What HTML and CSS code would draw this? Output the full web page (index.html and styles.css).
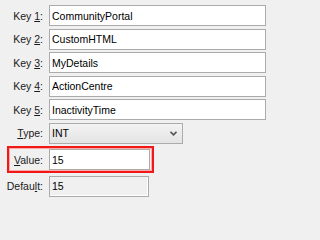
FILE: index.html
```html
<!DOCTYPE html>
<html>
<head>
<meta charset="utf-8">
<link rel="stylesheet" href="styles.css">
</head>
<body>
<div class="form">
  <div class="row"><span class="lbl">Key <u>1</u>:</span><div class="field text">CommunityPortal</div></div>
  <div class="row"><span class="lbl">Key <u>2</u>:</span><div class="field text">CustomHTML</div></div>
  <div class="row"><span class="lbl">Key <u>3</u>:</span><div class="field text">MyDetails</div></div>
  <div class="row"><span class="lbl">Key <u>4</u>:</span><div class="field text">ActionCentre</div></div>
  <div class="row"><span class="lbl">Key <u>5</u>:</span><div class="field text">InactivityTime</div></div>
  <div class="row"><span class="lbl"><u>T</u>ype:</span><div class="field combo"><span>INT</span><svg class="chev" width="7" height="5" viewBox="0 0 7 5"><path d="M0.5 0.8 L3.5 3.8 L6.5 0.8" fill="none" stroke="#555" stroke-width="1.6"/></svg></div></div>
  <div class="row hl"><span class="lbl"><u>V</u>alue:</span><div class="field text small">15</div></div>
  <div class="row"><span class="lbl">Defau<u>l</u>t:</span><div class="field ro">15</div></div>
</div>
</body>
</html>
```
FILE: styles.css
```css
html, body {
  margin: 0;
  background: #f0f0f0;
}
body {
  font-family: "Liberation Sans", Arial, sans-serif;
  font-size: 10.5px;
  color: #000;
  width: 271px;
  height: 202px;
  overflow: hidden;
}
.form {
  display: flex;
  flex-direction: column;
  row-gap: 2.5px;
  padding-top: 5px;
}
.row {
  display: flex;
  align-items: center;
  height: 21px;
}
.lbl {
  width: 43px;
  margin-right: 6px;
  text-align: right;
  color: #1a1a1a;
  white-space: nowrap;
}
.lbl u {
  text-decoration-thickness: 1px;
  text-underline-offset: 1px;
}
.field {
  box-sizing: border-box;
  height: 21px;
  border: 1px solid #ababab;
  padding: 0 2px;
  display: flex;
  align-items: center;
}
.text {
  width: 217px;
  background: #fff;
}
.combo {
  width: 134px;
  background: linear-gradient(#f3f3f3, #e4e4e4);
  border-color: #acacac;
  justify-content: space-between;
  padding-right: 5px;
}
.chev {
  display: block;
  margin-top: 1px;
}
.hl {
  height: 27px;
  box-sizing: border-box;
  margin-left: 7px;
  width: 147px;
  border: 2px solid #f01818;
  padding: 1px 2px 1px 0;
  box-shadow: inset 0 0 0 1px #ffa8a8;
}
.hl .lbl {
  width: 34px;
}
.text.small {
  width: 101px;
}
.ro {
  width: 100px;
  background: #f0f0f0;
  box-shadow: inset -1px -1px 0 #fff;
}
```
